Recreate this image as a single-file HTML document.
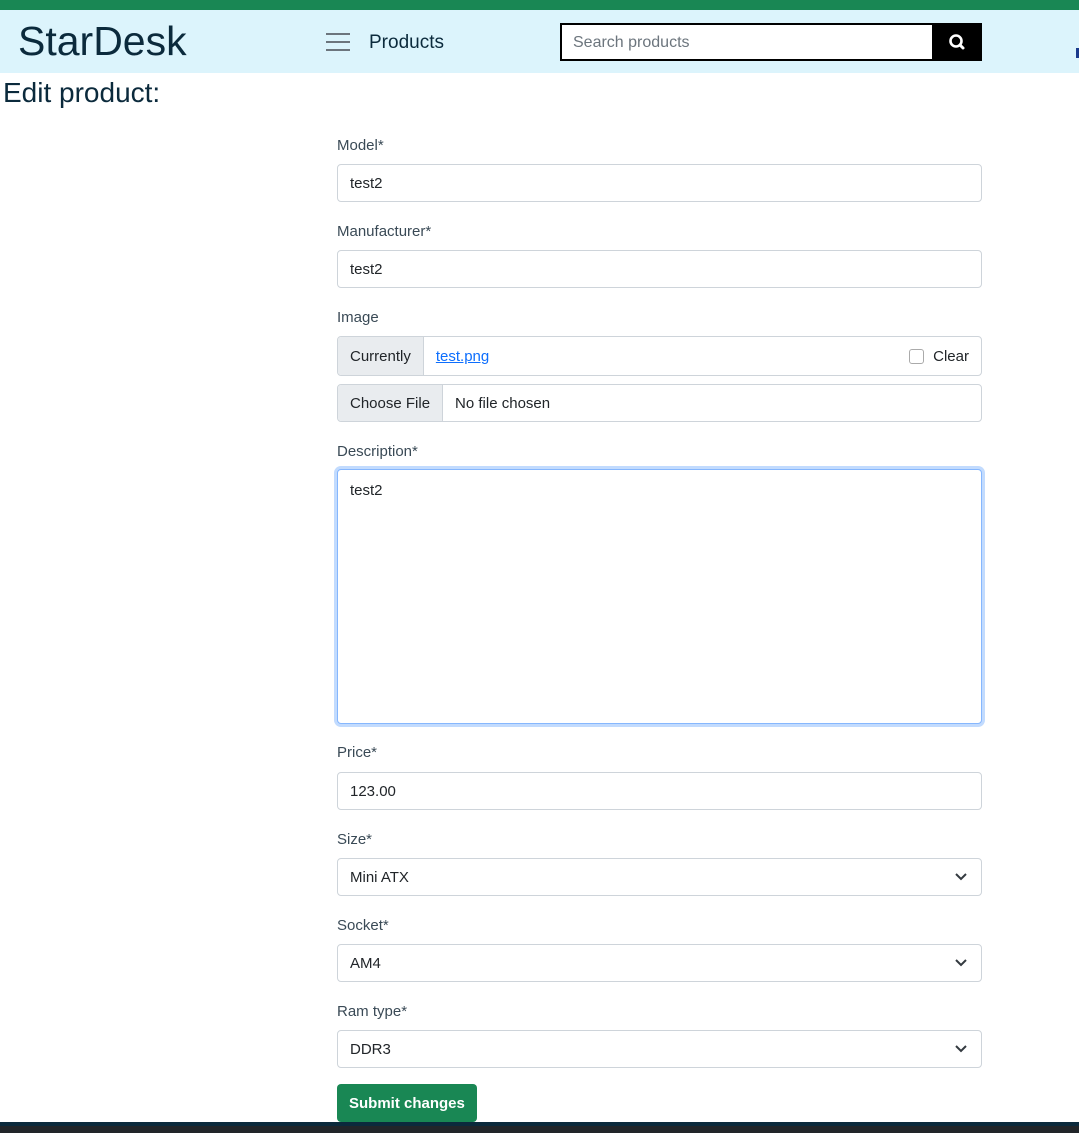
<!DOCTYPE html>
<html><head><meta charset="utf-8"><style>
*{box-sizing:border-box;margin:0;padding:0}
body{width:1079px;height:1133px;position:relative;background:#fff;font-family:"Liberation Sans",sans-serif;color:#212529;overflow:hidden}
.a{position:absolute}
.top{left:0;top:0;width:1079px;height:10px;background:#198754}
.nav{left:0;top:10px;width:1079px;height:63px;background:#dcf4fc}
.logo{left:18px;top:17px;font-size:41px;color:#0b2a3c;line-height:48px}
.hb{left:326px;width:24px;height:2px;background:#6c757d}
.prod{left:369px;top:32px;font-size:19px;color:#0b2a3c}
.search{left:560px;top:23px;width:373px;height:38px;border:2px solid #000;border-right:none;background:#fff;font-size:16px;color:#6c757d;padding:9px 11px}
.sbtn{left:932px;top:23px;width:50px;height:38px;background:#000}
.h{left:3px;top:77px;font-size:28px;color:#0b2a3c}
.lbl{left:337px;font-size:15px;color:#3a4a56}
.in{left:337px;width:645px;height:38px;border:1px solid #ced4da;border-radius:4px;font-size:15px;padding:10px 12px;background:#fff}
.grp{left:337px;width:645px;border:1px solid #ced4da;border-radius:4px;overflow:hidden;display:flex;font-size:15px;background:#fff;padding-top:1px}
.grp .t{background:#e9ecef;border-right:1px solid #ced4da;padding:0 12px;display:flex;align-items:center;margin-top:-1px}
.chev{position:absolute;right:14px;top:13px}
.btn{left:337px;top:1084px;width:140px;height:38px;background:#198754;color:#fff;border-radius:4px;font-size:15px;padding:11px 12px;font-weight:bold}
</style></head><body>
<div class="a top"></div>
<div class="a nav"></div>
<div class="a logo">StarDesk</div>
<div class="a hb" style="top:33px"></div><div class="a hb" style="top:41px"></div><div class="a hb" style="top:49px"></div>
<div class="a prod">Products</div>
<div class="a search">Search products</div>
<div class="a sbtn"><svg width="50" height="38"><circle cx="24" cy="18" r="5.5" fill="none" stroke="#fff" stroke-width="2.6"/><line x1="28" y1="22" x2="31" y2="25" stroke="#fff" stroke-width="3" stroke-linecap="round"/></svg></div>
<div class="a" style="left:1076px;top:48px;width:3px;height:10px;background:#1a3a8c"></div>
<div class="a h">Edit product:</div>

<div class="a lbl" style="top:137px">Model*</div>
<div class="a in" style="top:164px">test2</div>
<div class="a lbl" style="top:223px">Manufacturer*</div>
<div class="a in" style="top:250px">test2</div>
<div class="a lbl" style="top:309px">Image</div>
<div class="a grp" style="top:336px;height:40px"><div class="t">Currently</div><div style="padding:0 12px;display:flex;align-items:center;flex:1"><span style="color:#0d6efd;text-decoration:underline">test.png</span><span style="margin-left:auto;display:flex;align-items:center"><span style="width:15px;height:15px;border:1px solid #aaa;border-radius:3px;margin-right:9px"></span>Clear</span></div></div>
<div class="a grp" style="top:384px;height:38px"><div class="t">Choose File</div><div style="padding:0 12px;display:flex;align-items:center">No file chosen</div></div>
<div class="a lbl" style="top:443px">Description*</div>
<div class="a in" style="top:469px;height:255px;border:1px solid #86b7fe;box-shadow:0 0 0 3px rgba(13,110,253,.25);padding-top:12px">test2</div>
<div class="a lbl" style="top:744px">Price*</div>
<div class="a in" style="top:772px">123.00</div>
<div class="a lbl" style="top:831px">Size*</div>
<div class="a in" style="top:858px">Mini ATX<svg class="chev" width="12" height="10"><path d="M1 2l5 5 5-5" fill="none" stroke="#343a40" stroke-width="2"/></svg></div>
<div class="a lbl" style="top:917px">Socket*</div>
<div class="a in" style="top:944px">AM4<svg class="chev" width="12" height="10"><path d="M1 2l5 5 5-5" fill="none" stroke="#343a40" stroke-width="2"/></svg></div>
<div class="a lbl" style="top:1003px">Ram type*</div>
<div class="a in" style="top:1030px">DDR3<svg class="chev" width="12" height="10"><path d="M1 2l5 5 5-5" fill="none" stroke="#343a40" stroke-width="2"/></svg></div>
<div class="a btn">Submit changes</div>
<div class="a" style="left:0;top:1122px;width:1079px;height:4px;background:#0b2a3c"></div>
<div class="a" style="left:0;top:1126px;width:1079px;height:7px;background:#212529"></div>
</body></html>
